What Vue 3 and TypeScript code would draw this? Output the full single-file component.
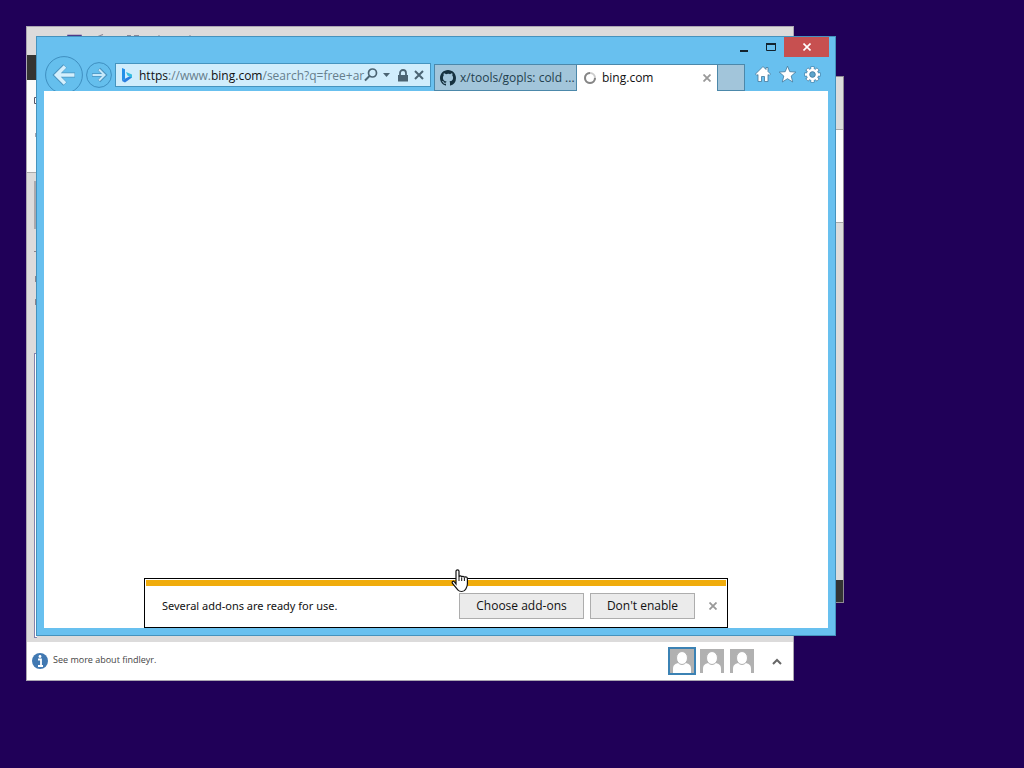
<script setup lang="ts">
import { ref } from 'vue'

interface Person { id: number; label: string }

const address = { scheme: 'https', sep: '://www.', host: 'bing.com', path: '/search?q=free+ar' }
const people: Person[] = [
  { id: 1, label: 'Contact 1' },
  { id: 2, label: 'Contact 2' },
  { id: 3, label: 'Contact 3' },
]
const selected = ref(1)
</script>

<template>
  <main class="desktop">
    <section class="side-window" aria-label="Background window">
      <div class="side-title"></div>
      <div class="side-head"></div>
      <div class="side-body"></div>
      <div class="side-status"></div>
    </section>

    <section class="mail-window" aria-label="Mail window">
      <div class="mail-title">
        <svg width="140" height="5" viewBox="0 0 140 5">
          <path d="M1 3V1.500H14V3" fill="none" stroke="#4d3a88" stroke-width="1.500" />
          <path d="M31 2.500l5-2M60 1.500h4M67 1.500h5M91 2h2M122 2h2" stroke="#8a8898" stroke-width="1.200" />
        </svg>
      </div>
      <div class="mail-ribbon"></div>
      <div class="mail-head">
        <svg width="3" height="64" viewBox="0 0 3 64">
          <path d="M3 17.500H.5v6H3M3 53H2v4h1" fill="none" stroke="#555568" />
        </svg>
      </div>
      <div class="mail-body">
        <div class="mail-edge">
          <i class="scroll-piece"></i>
          <svg width="3" height="120" viewBox="0 0 3 120">
            <path d="M0 22.500h3M1.500 47v6M1.500 70v6" fill="none" stroke="#8a858c" />
          </svg>
          <i class="panel-piece"></i>
        </div>
      </div>
      <footer class="people-bar">
        <svg class="info" width="16" height="16" viewBox="0 0 16 16">
          <circle cx="8" cy="8" r="8" fill="#4179b2" />
          <path d="M6 6.500h3V13M6 13h5" fill="none" stroke="#fff" stroke-width="1.800" />
          <circle cx="8" cy="3.500" r="1.400" fill="#fff" />
        </svg>
        <span class="see-more">See more about findleyr.</span>
        <button
          v-for="p in people"
          :key="p.id"
          class="person"
          :class="{ active: p.id === selected }"
          :aria-label="p.label"
          @click="selected = p.id"
        >
          <svg width="24" height="24" viewBox="0 0 24 24">
            <path d="M0 0h24v24H0z" fill="#b1b1b1" />
            <path d="M3 24v-4c0-4 2-5 5-6h8c3 1 5 2 5 6v4z" fill="#fff" />
            <ellipse cx="12" cy="9" rx="5.500" ry="6.500" fill="#fff" stroke="#b1b1b1" />
          </svg>
        </button>
        <button class="expand" aria-label="Expand">
          <svg width="10" height="7" viewBox="0 0 10 7"><path d="M1 6l4-4 4 4" fill="none" stroke="#666" stroke-width="2" /></svg>
        </button>
      </footer>
    </section>

    <section class="browser" aria-label="Browser window">
      <header class="caption">
        <button aria-label="Minimize"><svg width="8" height="12" viewBox="0 0 8 12"><path d="M0 10h8" stroke="#12232e" stroke-width="2" /></svg></button>
        <button aria-label="Maximize"><svg width="10" height="8" viewBox="0 0 10 8"><path d="M.5 0v7.500h9V0" fill="none" stroke="#12232e" /><path d="M0 1h10" stroke="#12232e" stroke-width="2" /></svg></button>
        <button class="close" aria-label="Close"><svg width="8" height="8" viewBox="0 0 8 8"><path d="M.5.5l7 7M7.500.5l-7 7" stroke="#fff" stroke-width="1.600" /></svg></button>
      </header>

      <nav class="toolbar">
        <button class="back" aria-label="Back">
          <svg width="38" height="38" viewBox="0 0 38 38">
            <circle cx="19" cy="19" r="18.400" fill="#65bfed" stroke="#3f8fc0" />
            <path d="M30 19H11M20 10l-9 9 9 9" fill="none" stroke="#4a94c0" stroke-width="5" />
            <path d="M29.500 19H11M20 10.500L11.500 19l8.500 8.500" fill="none" stroke="#d4effd" stroke-width="3.600" />
          </svg>
        </button>
        <button class="forward" aria-label="Forward">
          <svg width="26" height="26" viewBox="0 0 26 26">
            <circle cx="13" cy="13" r="12.400" fill="#65bfed" stroke="#3f8fc0" />
            <path d="M6 13h12M13 7l6 6-6 6" fill="none" stroke="#4a94c0" stroke-width="3.600" />
            <path d="M6.500 13H18M13 7.500l5.500 5.500-5.500 5.500" fill="none" stroke="#c5e8fa" stroke-width="2" />
          </svg>
        </button>

        <div class="address">
          <svg width="12" height="15" viewBox="0 0 12 15">
            <path d="M1 0l3 1.200v9.600L1 13z" fill="#238fe9" />
            <path d="M1 13l3-2.200L11 7v2.500L4 14.500z" fill="#2a7ee0" />
            <path d="M5 4l6 2.500V10L8.500 8.500 6.500 7.600z" fill="#36bde0" />
          </svg>
          <a class="url" href="#"><b>{{ address.scheme }}</b>{{ address.sep }}<b>{{ address.host }}</b>{{ address.path }}</a>
          <button aria-label="Search"><svg width="14" height="14" viewBox="0 0 14 14"><circle cx="8.500" cy="5" r="4" fill="none" stroke="#4b6473" stroke-width="1.700" /><path d="M5.500 8L1 12.500" stroke="#4b6473" stroke-width="2" /></svg></button>
          <button class="drop" aria-label="Show address list"><svg width="7" height="4" viewBox="0 0 7 4"><path d="M0 0h7L3.500 4z" fill="#4b6473" /></svg></button>
          <button class="lock" aria-label="Security report"><svg width="10" height="13" viewBox="0 0 10 13"><path d="M2 6V4a3 3 0 016 0v2" fill="none" stroke="#4b6473" stroke-width="1.800" /><path d="M0 6h10v6.500H0z" fill="#4b6473" /></svg></button>
          <button aria-label="Stop"><svg width="10" height="10" viewBox="0 0 10 10"><path d="M1 1l8 8M9 1L1 9" stroke="#4b6473" stroke-width="2" /></svg></button>
        </div>

        <div class="tabs" role="tablist">
          <button class="tab gopls" role="tab" aria-selected="false">
            <svg width="16" height="16" viewBox="0 0 16 16"><path fill="#16313f" d="M8 0C3.580 0 0 3.580 0 8c0 3.540 2.290 6.530 5.470 7.590.4.070.55-.17.55-.38 0-.19-.01-.82-.01-1.490-2.010.37-2.530-.49-2.690-.94-.09-.23-.48-.94-.82-1.130-.28-.15-.68-.52-.01-.53.63-.01 1.080.58 1.230.82.72 1.210 1.870.87 2.330.66.07-.52.28-.87.51-1.070-1.780-.2-3.640-.89-3.640-3.950 0-.87.31-1.590.82-2.150-.08-.2-.36-1.020.08-2.120 0 0 .67-.21 2.200.82A7.700 7.700 0 018 3.860c.68 0 1.360.09 2 .27 1.530-1.040 2.200-.82 2.200-.82.44 1.100.16 1.920.08 2.120.51.56.82 1.270.82 2.150 0 3.070-1.870 3.750-3.650 3.950.29.25.54.73.54 1.480 0 1.070-.01 1.930-.01 2.200 0 .21.15.46.55.38A8 8 0 0016 8c0-4.420-3.580-8-8-8z" /></svg>
            <span>x/tools/gopls: cold ...</span>
          </button>
          <div class="tab current">
            <button class="tab-label" role="tab" aria-selected="true">
              <svg width="14" height="14" viewBox="0 0 14 14"><circle cx="7" cy="7" r="5" fill="none" stroke="#ccc" stroke-width="2" /><path d="M12 7A5 5 0 117 2" fill="none" stroke="#858585" stroke-width="2" /></svg>
              <span>bing.com</span>
            </button>
            <button class="x" aria-label="Close tab"><svg width="8" height="8" viewBox="0 0 8 8"><path d="M.5.5l7 7M7.500.5l-7 7" stroke="#999" stroke-width="1.800" /></svg></button>
          </div>
          <button class="tab new-tab" aria-label="New tab"></button>
        </div>

        <div class="tools">
          <button aria-label="Home"><svg width="16" height="16" viewBox="0 0 16 16"><path d="M8 .5L.5 8l1.300 1.500L3 8.600V15.500h3.500v-5h3v5H13V8.600l1.200.9L15.500 8 13 5.500V1.500h-2v2z" fill="#fff" stroke="#43779a" stroke-width=".8" /></svg></button>
          <button aria-label="Favorites"><svg width="17" height="17" viewBox="0 0 17 17"><path d="M8.500.2l2.300 5.500 6 .4-4.600 3.900 1.500 6-5.200-3.300L3.300 16l1.500-6L.2 6.100l6-.4z" fill="#fff" stroke="#43779a" stroke-width=".8" /></svg></button>
          <button aria-label="Tools"><svg width="17" height="17" viewBox="0 0 17 17"><g stroke="#43779a" stroke-width="4"><path d="M8.500.5v16M.5 8.500h16M2.800 2.800l11.400 11.400M14.200 2.800L2.800 14.200" /></g><g stroke="#fff" stroke-width="2.600"><path d="M8.500 1v15M1 8.500h15M3.200 3.200l10.600 10.600M13.800 3.200L3.200 13.800" /></g><circle cx="8.500" cy="8.500" r="4.300" fill="#5ca5cc" stroke="#fff" stroke-width="2.800" /><circle cx="8.500" cy="8.500" r="2.800" fill="none" stroke="#43779a" stroke-width=".8" /></svg></button>
        </div>
      </nav>

      <div class="page">
        <div class="notice" role="alert">
          <div class="stripe"></div>
          <div class="notice-row">
            <span class="message">Several add-ons are ready for use.</span>
            <button class="action choose">Choose add-ons</button>
            <button class="action dont">Don't enable</button>
            <button class="x" aria-label="Dismiss"><svg width="8" height="8" viewBox="0 0 8 8"><path d="M.5.5l7 7M7.500.5l-7 7" stroke="#999" stroke-width="1.800" /></svg></button>
          </div>
        </div>
      </div>
    </section>

    <svg class="pointer" width="19" height="24" viewBox="0 0 19 24">
      <path d="M5 15V2.200C5 .3 8 .3 8 2.200V8c0-1.500 2.700-1.500 2.700.3 0-1.500 2.700-1.300 2.700.5 0-1.300 3-1.200 3 .7v5.500c0 2-.6 3-1.600 5-1 2-2 2.500-4 2.500S8 22.500 7 21l-5.500-6.500C.3 12.500 2.500 11.500 3.500 13z" fill="#fff" stroke="#111" stroke-width="1.200" />
      <path d="M8 8v4M10.700 8.500V12M13.400 9v3" stroke="#111" />
    </svg>
  </main>
</template>

<style>
body { margin: 0; background: #200058; }
</style>

<style scoped>
* { box-sizing: border-box; }
.desktop {
  position: relative;
  min-height: 100vh;
  overflow: hidden;
  background: #200058;
  font: 12px/16px "Open Sans", "Noto Sans", sans-serif;
  color: #111;
}
button {
  display: flex;
  align-items: center;
  justify-content: center;
  flex: none;
  margin: 0;
  padding: 0;
  border: 0;
  background: none;
  color: inherit;
  font: inherit;
}
svg { display: block; flex: none; }

.side-window, .mail-window, .browser { position: absolute; display: flex; flex-direction: column; }

.side-window { left: 44px; top: 76px; width: 800px; height: 527px; border: 1px solid #8f8a94; background: #dcdcdc; }
.side-title { height: 53px; border-bottom: 1px solid #aaa; }
.side-head { height: 93px; background: #fdfdfd; border-bottom: 1px solid #aaa; }
.side-body { flex: 1; }
.side-status { height: 22px; background: #333; }

.mail-window { left: 26px; top: 26px; width: 768px; height: 655px; border: 1px solid #aaa5b2; background: #dcdbdb; }
.mail-title { height: 28px; padding: 7px 0 0 40px; }
.mail-ribbon { height: 25px; background: #353432; }
.mail-head { height: 93px; padding-left: 7px; background: #fafafa; border-bottom: 1px solid #aaa; }
.mail-body { flex: 1; display: flex; padding: 8px 0 4px 7px; }
.mail-edge { display: flex; flex-direction: column; width: 3px; }
.scroll-piece { height: 48px; background: #aaa9ad; }
.panel-piece { flex: 1; margin-top: 4px; border: 1px solid #8383ad; border-right: 0; background: #fff; }
.people-bar { display: flex; align-items: center; height: 38px; padding: 0 11px 0 5px; background: #fff; }
.see-more { flex: 1; margin-left: 5px; padding-bottom: 2px; color: #444; font-size: 9px; line-height: 12px; }
.person { width: 28px; height: 28px; margin-right: 2px; }
.person.active { border: 2px solid #3b82b4; }
.expand { width: 10px; height: 28px; margin-left: 14px; }

.browser { left: 36px; top: 36px; width: 800px; height: 600px; padding: 0 7px 7px; border: 1px solid #4592bd; background: #68c0ef; }
.caption { display: flex; justify-content: flex-end; height: 20px; margin-right: -1px; }
.caption button { width: 27px; height: 20px; }
.caption .close { width: 45px; background: #c75050; }
.toolbar { display: flex; align-items: flex-end; height: 34px; }
.back { width: 38px; height: 38px; margin: 0 3px -3px 1px; }
.forward { width: 26px; height: 26px; margin: 0 3px 3px 0; }
.address { display: flex; align-items: center; flex: 1; min-width: 0; height: 24px; margin-bottom: 4px; padding: 0 6px 0 5px; border: 1px solid #4594bf; background: #d0edfc; }
.url { flex: 1; min-width: 0; margin-left: 6px; padding-top: 2px; white-space: nowrap; color: #667e8c; text-decoration: none; }
.url b { color: #111; font-weight: 400; }
.address button { height: 22px; margin-left: 5px; }
.address .lock { margin-left: 8px; }
.address button:last-child { margin-left: 6px; }
.tabs { display: flex; margin-left: 3px; }
.tab { height: 27px; border: 1px solid #4c88aa; border-left-width: 0; background: #a2c5da; }
.gopls { width: 143px; gap: 4px; border-left-width: 1px; justify-content: flex-start; padding-left: 5px; color: #223f4e; white-space: nowrap; }
.current { display: flex; align-items: center; width: 141px; padding: 0 6px; border-bottom: 0; background: #fff; }
.tab-label { flex: 1; gap: 5px; justify-content: flex-start; height: 26px; }
.new-tab { width: 27px; }
.tools { display: flex; gap: 8px; margin: 0 7px 8px 9px; }
.tools button { width: 17px; height: 18px; }
.page { flex: 1; display: flex; flex-direction: column; justify-content: flex-end; align-items: center; background: #fff; }
.notice { width: 584px; height: 50px; padding: 1px; border: 1px solid #000; background: #fff; }
.stripe { height: 6px; background: #f0ac0c; }
.notice-row { display: flex; align-items: center; height: 40px; padding: 0 9px 0 16px; }
.message { flex: 1; font-family: "Noto Sans", sans-serif; font-size: 11px; }
.action { height: 26px; margin-right: 6px; border: 1px solid #adadad; background: #ebebeb; }
.choose { width: 125px; }
.dont { width: 105px; margin-right: 14px; }
.pointer { position: absolute; left: 451px; top: 569px; }
</style>
